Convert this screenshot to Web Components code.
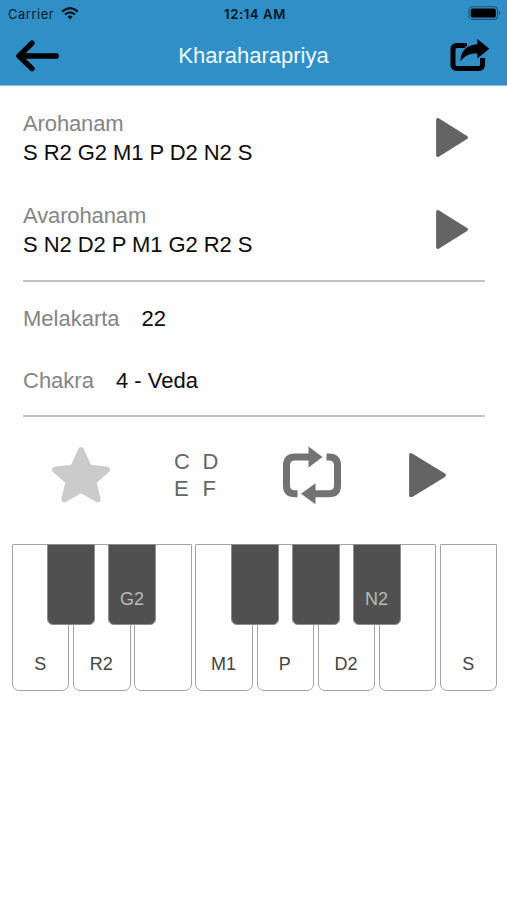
<!DOCTYPE html>
<html lang="en"><head><meta charset="utf-8"><title>Kharaharapriya</title>
<style>
html,body{margin:0;background:#fefefe}
body{width:507px;height:900px;overflow:hidden;font:22px "Liberation Sans",Arial,sans-serif;color:#111}
</style></head><body>
<raga-page></raga-page>
<script>
function define(name, html){
  const t=document.createElement('template'); t.innerHTML=html;
  customElements.define(name, class extends HTMLElement{
    constructor(){super();this.attachShadow({mode:'open'}).append(t.content.cloneNode(true));}
  });
}
define('status-bar',`<style>
:host{display:grid;grid-template-columns:1fr auto 1fr;height:28px;align-items:center;font-family:Inter,sans-serif;font-size:13px;color:#0b1c28;padding:0 5px 0 8px}
.l{display:flex;align-items:center;gap:7px;letter-spacing:.5px}
b{font-weight:600;color:#06141e;font-size:13.2px;letter-spacing:.55px}
.r{justify-self:end}svg{display:block}
</style><div class="l"><span>Carrier</span><svg width="18" height="14" viewBox="0 0 18 14" fill="none" stroke="#05111a" stroke-width="2.1"><path d="M1.2 4.6Q9-2.5 16.8 4.6M4 7.6Q9 3 14 7.6"/><path d="M6.4 9.6Q9 7.3 11.6 9.6L9 12.4Z" fill="#05111a" stroke="none"/></svg></div><b>12:14 AM</b>
<svg class="r" width="34" height="16" viewBox="0 0 34 16"><rect x="1" y="0.8" width="28.5" height="12.6" rx="3.4" fill="none" stroke="#1d5271" stroke-width="1.1"/><rect x="2.8" y="2.6" width="25" height="9" rx="1.6"/><path d="M31 4.9q2.2 2.2 0 4.4z" fill="#174b6a"/></svg>`);
define('nav-bar',`<style>
:host{display:grid;grid-template-columns:44px 1fr 44px;align-items:center;height:56px;padding:0 15px;color:#f3faff}
.t{text-align:center}svg{display:block;overflow:visible}
</style><svg width="46" height="32" viewBox="0 0 46 32" fill="none" stroke="#000" stroke-width="5.4" stroke-linecap="round" stroke-linejoin="round"><path d="M41.3 16H5M17 3.2L4 16L17 28.6"/></svg>
<div class="t"><slot></slot></div>
<svg width="44" height="34" viewBox="0 0 44 34"><path d="M19 6.5H9Q5 6.5 5 10.5V25.5Q5 29.5 9 29.5H30.6Q34.6 29.5 34.6 25.5V19" fill="none" stroke="#000" stroke-width="5"/><path d="M29.3 0L41.3 9.8L29.3 19.6V14.6C23 14 17.5 16 12.5 22.3C12.3 12.5 18.5 5.8 29.3 5.2Z" stroke="#308fc7" stroke-width="2.4" paint-order="stroke"/></svg>`);
define('play-icon',`<style>:host{display:block}svg{display:block;width:100%;height:100%}</style>
<svg viewBox="0 0 32 39" preserveAspectRatio="none"><path d="M1.8 1.8L30.2 19.5L1.8 37.2Z" fill="#646464" stroke="#646464" stroke-width="3.4" stroke-linejoin="round"/></svg>`);
define('scale-row',`<style>
:host{display:flex;justify-content:space-between;height:58px;padding-right:17px;line-height:29px}
.n{color:#858585;letter-spacing:-.12px}.v{color:#0c0c0c;letter-spacing:-.07px}
play-icon{width:32px;height:39px;margin-top:9px}
</style><div><div class="n"><slot name="name"></slot></div><div class="v"><slot></slot></div></div><play-icon></play-icon>`);
define('fact-row',`<style>
:host{display:flex;gap:22px;line-height:29px;height:29px}
.n{color:#858585}.v{color:#0c0c0c}
</style><div class="n"><slot name="name"></slot></div><div class="v"><slot></slot></div>`);
define('tool-row',`<style>
:host{display:grid;grid-template-columns:123px 108px 127px 37px;align-items:center;height:116px;padding:0 0 11px 51px}
svg{display:block}
.g{display:grid;grid-template-columns:28.5px 17px;line-height:27px;color:#666;margin-top:-1px}
play-icon{width:37px;height:44.5px}
</style>
<svg width="60" height="58" viewBox="0 0 60 58"><path d="M30 4.2L37.8 21.6L56 23.7L42.4 35.7L46.6 53.3L30 44L13.4 53.3L17.6 35.7L4 23.7L22.2 21.6Z" fill="#cbcbcb" stroke="#cbcbcb" stroke-width="6" stroke-linejoin="round"/></svg>
<div class="g"><span>C</span><span>D</span><span>E</span><span>F</span></div>
<svg width="60" height="60" viewBox="0 0 60 60"><g fill="none" stroke="#737373" stroke-width="7"><path d="M15.5 48.8H13Q4.5 48.8 4.5 40.5V20.5Q4.5 12 13 12H27"/><path d="M44.5 12H47Q55.5 12 55.5 20.5V40.5Q55.5 48.8 47 48.8H32"/></g><path d="M26.5 1.5L40.5 12L26.5 22.5ZM33.5 38.3V59.3L19 48.8Z" fill="#737373"/></svg>
<play-icon></play-icon>`);
define('white-key',`<style>
:host{display:flex;box-sizing:border-box;border:1.5px solid #a4a4a4;border-radius:1px 1px 7px 7px;background:#fff;color:#444;font-size:18px;align-items:flex-end;justify-content:center;padding:0 1px 15px 0;line-height:21px}
</style><slot></slot>`);
define('black-key',`<style>
:host{display:flex;box-sizing:border-box;width:48px;height:81px;border:1px solid #8e8e8e;border-radius:0 0 6px 6px;background:#505050;color:#b9b9b9;font-size:18px;align-items:flex-end;justify-content:center;padding:0 1px 14px 0;line-height:21px}
</style><slot></slot>`);
define('piano-keys',`<style>
:host{display:block;position:relative;margin:0 10px 0 12px;height:147px}
.w{display:grid;grid-template-columns:repeat(8,57.4px);column-gap:3.75px;height:100%}
black-key{position:absolute;top:0;left:calc(35.3px + 61.15px * var(--i))}
</style><div class="w"><white-key>S</white-key><white-key>R2</white-key><white-key></white-key><white-key>M1</white-key><white-key>P</white-key><white-key>D2</white-key><white-key></white-key><white-key>S</white-key></div>
<black-key style="--i:0"></black-key><black-key style="--i:1">G2</black-key><black-key style="--i:3"></black-key><black-key style="--i:4"></black-key><black-key style="--i:5">N2</black-key>`);
define('raga-page',`<style>
:host{display:block}
header{background:#308fc7;border-bottom:1px solid #86bddd;height:85px}
section{margin:0 22px 0 23px;border-bottom:2px solid #c3c3c3;box-sizing:border-box;display:flex;flex-direction:column}
.scales{height:196px;padding-top:23px;gap:33.5px}
.facts{height:135px;padding-top:22px;gap:33px}
</style>
<header><status-bar></status-bar><nav-bar>Kharaharapriya</nav-bar></header>
<section class="scales"><scale-row><span slot="name">Arohanam</span>S R2 G2 M1 P D2 N2 S</scale-row>
<scale-row><span slot="name">Avarohanam</span>S N2 D2 P M1 G2 R2 S</scale-row></section>
<section class="facts"><fact-row><span slot="name">Melakarta</span>22</fact-row><fact-row><span slot="name">Chakra</span>4 - Veda</fact-row></section>
<tool-row></tool-row><piano-keys></piano-keys>`);
</script></body></html>
